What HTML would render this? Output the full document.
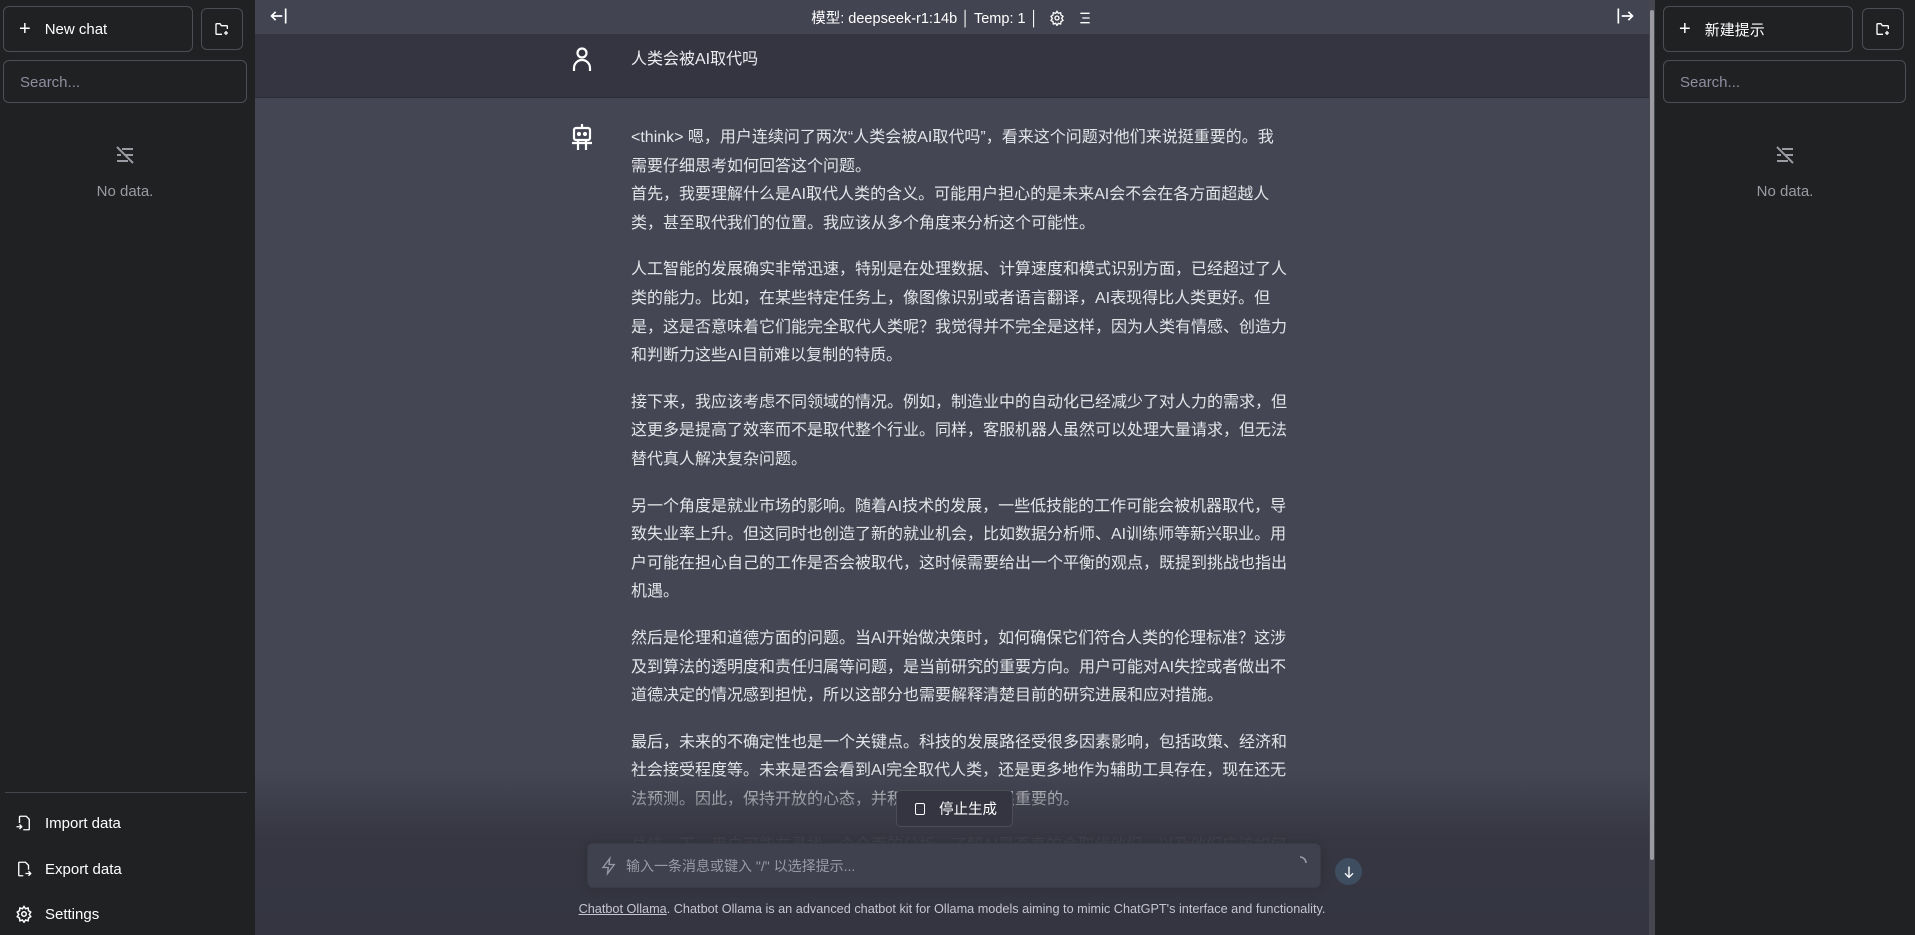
<!DOCTYPE html>
<html><head><meta charset="utf-8"><style>
*{box-sizing:border-box;margin:0;padding:0}
body{width:1915px;height:935px;overflow:hidden;background:#444654;font-family:"Liberation Sans","Noto Sans CJK SC",sans-serif;color:#ececf1;position:relative}
.side{position:absolute;top:0;height:935px;background:#202123}
.btn{position:absolute;border:1px solid #4d4d55;border-radius:6px;color:#fff;font-size:15px;display:flex;align-items:center}
.search{position:absolute;border:1px solid #4d4d55;border-radius:6px;color:#8e8ea0;font-size:15px;padding-left:16px;display:flex;align-items:center;padding-top:2px}
.nod{position:absolute;text-align:center;color:#9a9aa2;font-size:15px}
.main{position:absolute;left:255px;top:0;width:1394px;height:935px;background:#444654}
.hdr{position:absolute;left:0;top:0;width:100%;height:34px;background:#434451;font-size:15px;color:#fff}
.urow{position:absolute;left:0;top:34px;width:100%;height:64px;background:#343541;border-bottom:1px solid #2b2c35}
.txt{position:absolute;left:376px;top:124px;font-size:16px;line-height:28.6px;white-space:nowrap;color:#e3e4e8}
.txt p{margin-bottom:18px}
.fade{position:absolute;left:0;top:770px;width:100%;height:165px;background:linear-gradient(to bottom,rgba(52,53,65,0),rgba(53,54,65,.93) 40%,#353641 55%,#343541)}
.menu{position:absolute;left:0;color:#fff;font-size:15px;display:flex;align-items:center}
</style></head><body>

<div class="side" style="left:0;width:255px">
  <div class="btn" style="left:3px;top:6px;width:190px;height:46px"><span style="margin-left:15px;font-size:20px;font-weight:300">+</span><span style="margin-left:14px">New chat</span></div>
  <div class="btn" style="left:201px;top:8px;width:42px;height:42px;justify-content:center"><svg width="16" height="16" viewBox="0 0 24 24" fill="none" stroke="#fff" stroke-width="2"><path d="M12 20H4a1 1 0 0 1-1-1V5a1 1 0 0 1 1-1h5l2 3h8a1 1 0 0 1 1 1v4M18 15v6M15 18h6"/></svg></div>
  <div class="search" style="left:3px;top:60px;width:244px;height:43px">Search...</div>
  <div class="nod" style="left:0;width:250px;top:143px"><svg width="24" height="24" viewBox="0 0 24 24" fill="none" stroke="#9a9aa2" stroke-width="2"><path d="M4 4l16 16M9 6h11M12 12h8M4 18h11M4 12h4"/></svg><div style="margin-top:12px">No data.</div></div>
  <div style="position:absolute;left:5px;top:792px;width:242px;height:1px;background:#45454d"></div>
  <div class="menu" style="top:813px"><svg style="margin-left:15px" width="18" height="20" viewBox="0 0 24 24" fill="none" stroke="#fff" stroke-width="1.8"><path d="M6 12V4a1 1 0 0 1 1-1h8l4 4v13a1 1 0 0 1-1 1h-7M2 17h7M6 14l3 3-3 3"/></svg><span style="margin-left:12px">Import data</span></div>
  <div class="menu" style="top:859px"><svg style="margin-left:15px" width="18" height="20" viewBox="0 0 24 24" fill="none" stroke="#fff" stroke-width="1.8"><path d="M11 21H6a1 1 0 0 1-1-1V4a1 1 0 0 1 1-1h8l4 4v6M14 18h7M18 15l3 3-3 3"/></svg><span style="margin-left:12px">Export data</span></div>
  <div class="menu" style="top:905px"><svg style="margin-left:15px" width="18" height="18" viewBox="0 0 24 24" fill="none" stroke="#fff" stroke-width="2"><circle cx="12" cy="12" r="3"/><path d="M12 2l2 3 3.5-1 .5 3.5 3 2-2 3 2 3-3 2-.5 3.5-3.5-1-2 3-2-3-3.5 1-.5-3.5-3-2 2-3-2-3 3-2 .5-3.5 3.5 1z"/></svg><span style="margin-left:12px">Settings</span></div>
</div>

<div class="main">
  <div class="urow"></div>
  <div class="hdr">
    <svg style="position:absolute;left:14px;top:6px" width="20" height="20" viewBox="0 0 24 24" fill="none" stroke="#fff" stroke-width="2"><path d="M20 3v18M3 12h13M8 7l-5 5 5 5"/></svg>
    <div style="position:absolute;left:0;width:100%;top:7px;text-align:center;font-size:14.5px"><span style="margin-left:0">模型: deepseek-r1:14b │ Temp: 1 │</span>
      <svg style="vertical-align:-3px;margin-left:6px" width="16" height="16" viewBox="0 0 24 24" fill="none" stroke="#fff" stroke-width="2"><circle cx="12" cy="12" r="3"/><path d="M12 2l2 3 3.5-1 .5 3.5 3 2-2 3 2 3-3 2-.5 3.5-3.5-1-2 3-2-3-3.5 1-.5-3.5-3-2 2-3-2-3 3-2 .5-3.5 3.5 1z"/></svg>
      <svg style="vertical-align:-3px;margin-left:8px" width="16" height="16" viewBox="0 0 24 24" fill="none" stroke="#fff" stroke-width="2"><path d="M5 5h14M8 12h11M5 19h14"/></svg></div>
    <svg style="position:absolute;left:1360px;top:6px" width="20" height="20" viewBox="0 0 24 24" fill="none" stroke="#fff" stroke-width="2"><path d="M4 3v18M8 12h13M16 7l5 5-5 5"/></svg>
  </div>
  <svg style="position:absolute;left:315px;top:46px" width="24" height="26" viewBox="0 0 24 26" fill="none" stroke="#fff" stroke-width="2.2"><circle cx="12" cy="7" r="4.5"/><path d="M4 25v-3a8 8 0 0 1 16 0v3"/></svg>
  <div style="position:absolute;left:376px;top:45px;font-size:16px;color:#ececf1">人类会被AI取代吗</div>
  <svg style="position:absolute;left:316px;top:123px" width="22" height="28" viewBox="0 0 22 28" fill="none" stroke="#fff" stroke-width="2.2"><path d="M11 1v4"/><rect x="3" y="5" width="16" height="12" rx="2"/><circle cx="8" cy="11" r="1" fill="#fff"/><circle cx="14" cy="11" r="1" fill="#fff"/><path d="M1 20h20M7 17v10M15 17v10"/></svg>
  <div class="txt">
    <p>&lt;think&gt; 嗯，用户连续问了两次“人类会被AI取代吗”，看来这个问题对他们来说挺重要的。我<br>需要仔细思考如何回答这个问题。<br>首先，我要理解什么是AI取代人类的含义。可能用户担心的是未来AI会不会在各方面超越人<br>类，甚至取代我们的位置。我应该从多个角度来分析这个可能性。</p>
    <p>人工智能的发展确实非常迅速，特别是在处理数据、计算速度和模式识别方面，已经超过了人<br>类的能力。比如，在某些特定任务上，像图像识别或者语言翻译，AI表现得比人类更好。但<br>是，这是否意味着它们能完全取代人类呢？我觉得并不完全是这样，因为人类有情感、创造力<br>和判断力这些AI目前难以复制的特质。</p>
    <p>接下来，我应该考虑不同领域的情况。例如，制造业中的自动化已经减少了对人力的需求，但<br>这更多是提高了效率而不是取代整个行业。同样，客服机器人虽然可以处理大量请求，但无法<br>替代真人解决复杂问题。</p>
    <p>另一个角度是就业市场的影响。随着AI技术的发展，一些低技能的工作可能会被机器取代，导<br>致失业率上升。但这同时也创造了新的就业机会，比如数据分析师、AI训练师等新兴职业。用<br>户可能在担心自己的工作是否会被取代，这时候需要给出一个平衡的观点，既提到挑战也指出<br>机遇。</p>
    <p>然后是伦理和道德方面的问题。当AI开始做决策时，如何确保它们符合人类的伦理标准？这涉<br>及到算法的透明度和责任归属等问题，是当前研究的重要方向。用户可能对AI失控或者做出不<br>道德决定的情况感到担忧，所以这部分也需要解释清楚目前的研究进展和应对措施。</p>
    <p>最后，未来的不确定性也是一个关键点。科技的发展路径受很多因素影响，包括政策、经济和<br>社会接受程度等。未来是否会看到AI完全取代人类，还是更多地作为辅助工具存在，现在还无<br>法预测。因此，保持开放的心态，并积极适应变化是很重要的。</p>
    <p>总结一下，用户可能在寻找一个全面的分析，了解AI是否真的会取代他们，以及他们应该如何</p>
  </div>
  <div class="fade"></div>
  <div style="position:absolute;left:641px;top:790px;width:117px;height:37px;background:#343541;border:1px solid #4d4d55;border-radius:5px;display:flex;align-items:center;font-size:14.5px;color:#fff"><span style="display:inline-block;width:10px;height:12px;border:1.6px solid #fff;border-radius:2px;margin-left:18px"></span><span style="margin-left:14px">停止生成</span></div>
  <div style="position:absolute;left:332px;top:843px;width:734px;height:45px;background:#40414f;border:1px solid #3a3b47;border-radius:6px;box-shadow:0 0 10px rgba(0,0,0,.15);font-size:14px;color:#9a9aa6;display:flex;align-items:center">
    <svg style="margin-left:12px" width="18" height="20" viewBox="0 0 24 24" fill="none" stroke="#9a9aa6" stroke-width="1.8"><path d="M13 2L4 14h7l-1 8 9-12h-7z"/></svg><span style="margin-left:8px">输入一条消息或键入 "/" 以选择提示...</span>
    <svg style="position:absolute;right:12px;top:11px" width="16" height="16" viewBox="0 0 16 16" fill="none" stroke="#9a9aa6" stroke-width="1.6"><path d="M8 2a6 6 0 0 1 6 6"/></svg></div>
  <div style="position:absolute;left:1080px;top:858px;width:27px;height:27px;border-radius:50%;background:#3f4d60;display:flex;align-items:center;justify-content:center"><svg width="16" height="16" viewBox="0 0 24 24" fill="none" stroke="#fff" stroke-width="2"><path d="M12 4v16M6 14l6 6 6-6"/></svg></div>
  <div style="position:absolute;left:0;width:100%;top:902px;text-align:center;font-size:12.7px;color:#c5c5d2"><span style="text-decoration:underline">Chatbot Ollama</span>. Chatbot Ollama is an advanced chatbot kit for Ollama models aiming to mimic ChatGPT's interface and functionality.</div>
</div>
<div style="position:absolute;left:1649px;top:0;width:6px;height:935px;background:#45464f"></div>
<div style="position:absolute;left:1650px;top:10px;width:4px;height:850px;background:#9a9aa0;border-radius:2px"></div>

<div class="side" style="left:1655px;width:260px">
  <div class="btn" style="left:8px;top:6px;width:190px;height:46px"><span style="margin-left:15px;font-size:20px;font-weight:300">+</span><span style="margin-left:14px">新建提示</span></div>
  <div class="btn" style="left:207px;top:8px;width:42px;height:42px;justify-content:center"><svg width="16" height="16" viewBox="0 0 24 24" fill="none" stroke="#fff" stroke-width="2"><path d="M12 20H4a1 1 0 0 1-1-1V5a1 1 0 0 1 1-1h5l2 3h8a1 1 0 0 1 1 1v4M18 15v6M15 18h6"/></svg></div>
  <div class="search" style="left:8px;top:60px;width:243px;height:43px">Search...</div>
  <div class="nod" style="left:0;width:260px;top:143px"><svg width="24" height="24" viewBox="0 0 24 24" fill="none" stroke="#9a9aa2" stroke-width="2"><path d="M4 4l16 16M9 6h11M12 12h8M4 18h11M4 12h4"/></svg><div style="margin-top:12px">No data.</div></div>
</div>
</body></html>
